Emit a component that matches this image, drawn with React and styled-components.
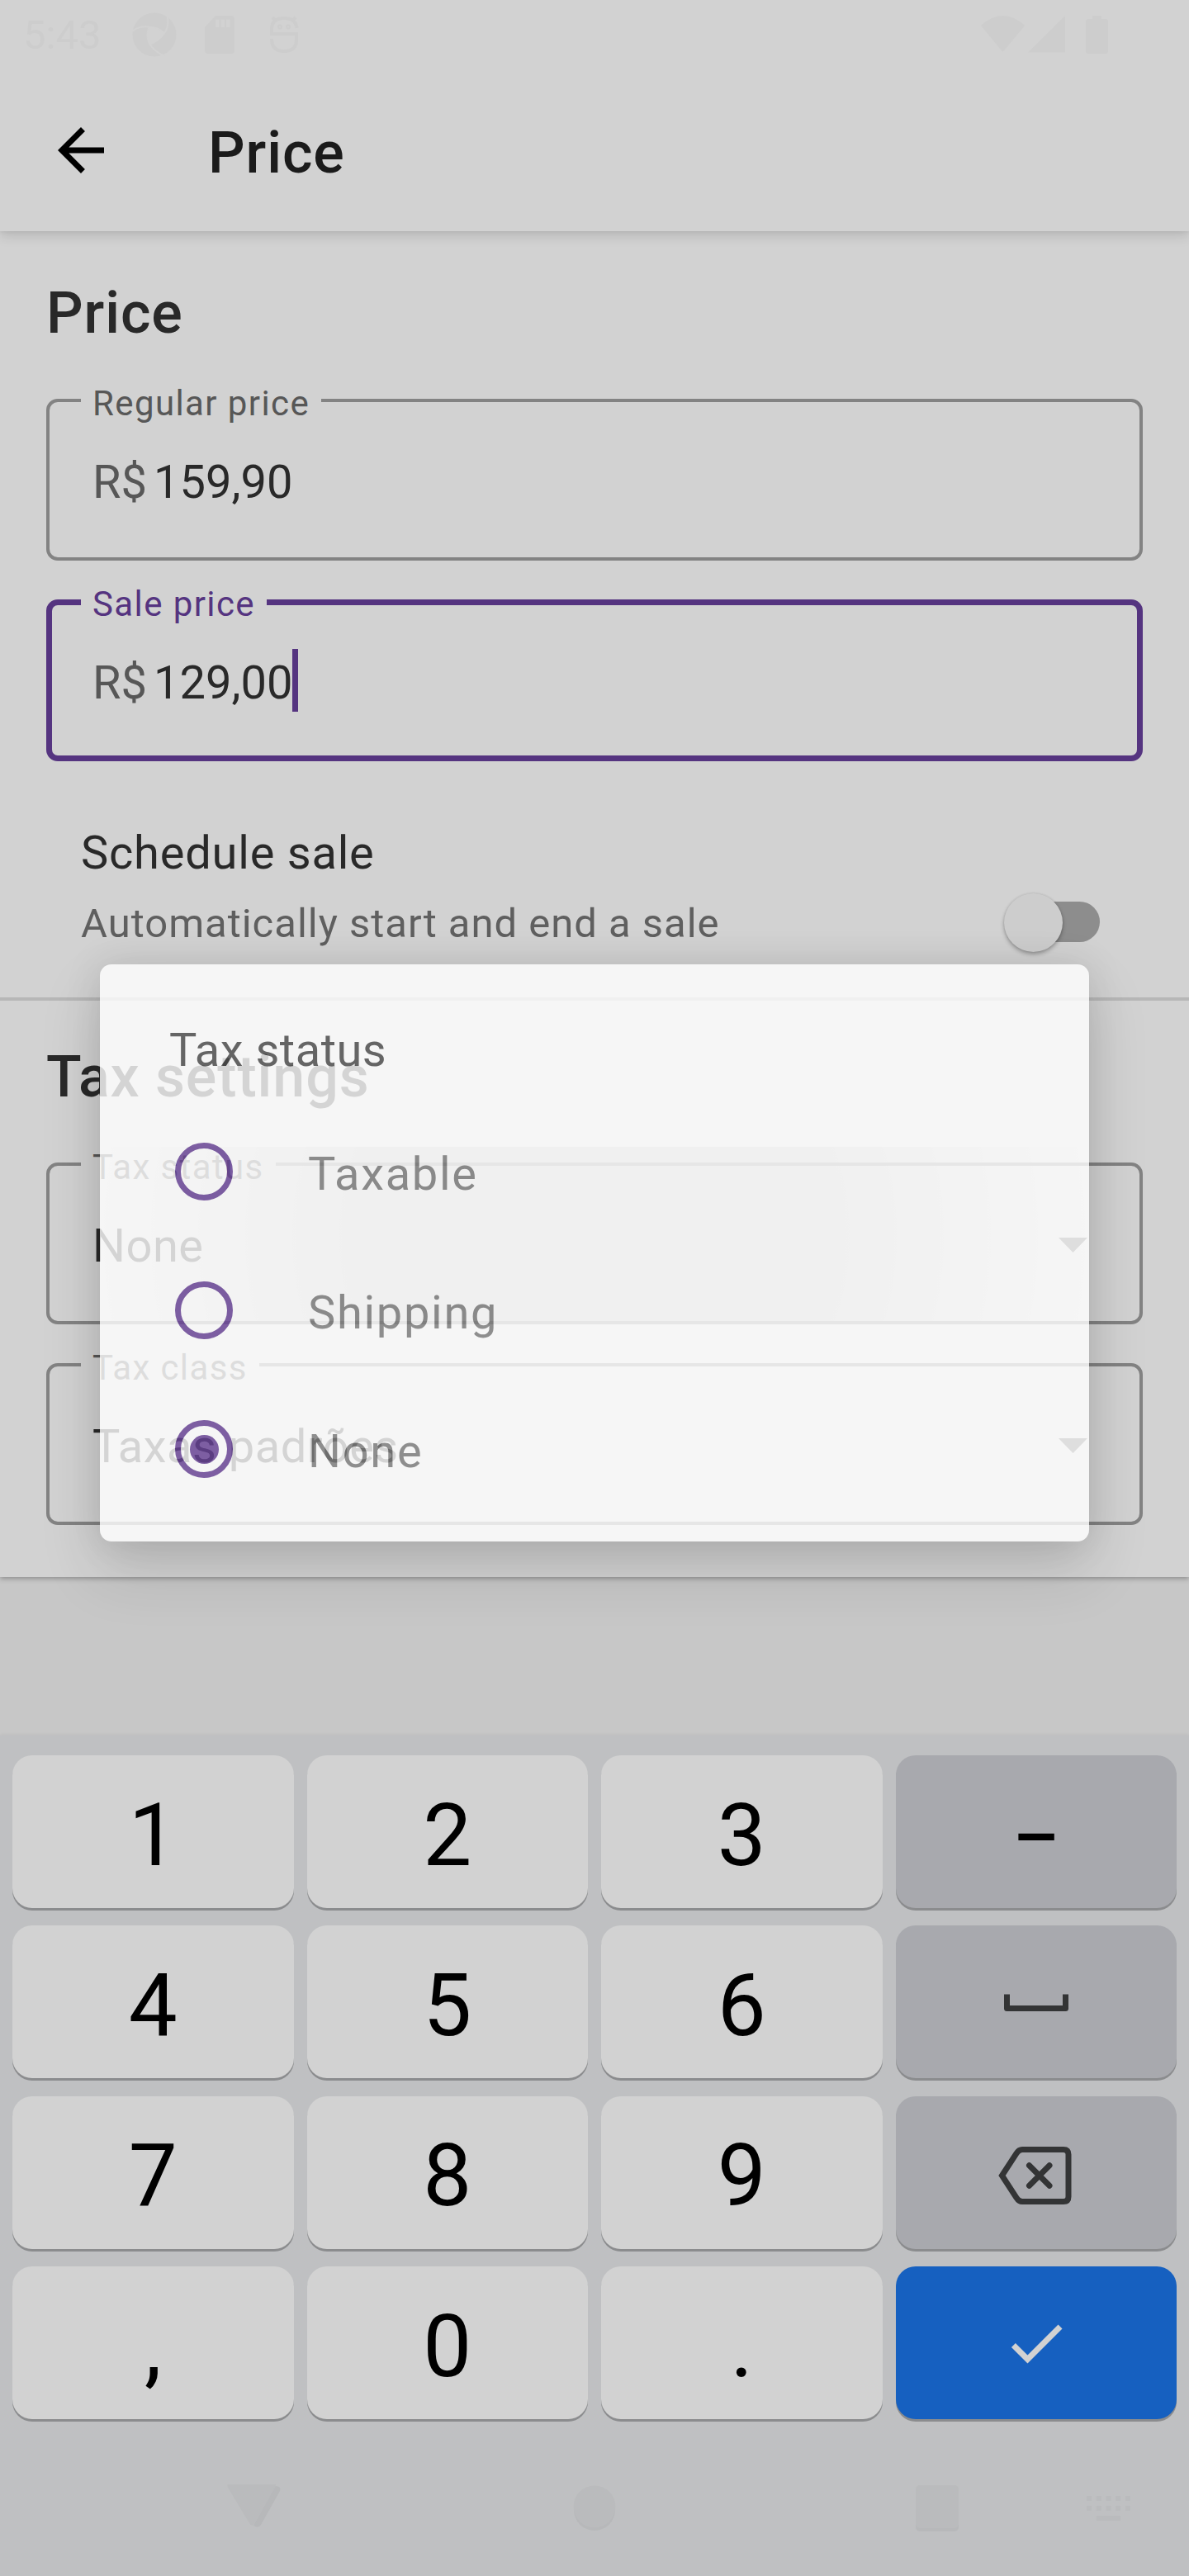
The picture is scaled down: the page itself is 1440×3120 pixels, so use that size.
import React from "react";
import styled, { createGlobalStyle, css } from "styled-components";

const ink = "#292929";
const muted = "#575757";
const purple = "#553480";
const surface = "#d2d2d2";
const faint = "#cdcdcd";

const GlobalStyle = createGlobalStyle`
  *, *::before, *::after { box-sizing: border-box; }
  body {
    margin: 0;
    background: #c7c7c7;
    font-family: Roboto, "Liberation Sans", sans-serif;
    color: ${ink};
  }
`;

const Screen = styled.div`
  position: relative;
  display: flex;
  flex-direction: column;
  width: 1440px;
  height: 3120px;
  overflow: hidden;
  background: #c7c7c7;
`;

const StatusBar = styled.div`
  position: relative;
  z-index: 2;
  display: flex;
  align-items: center;
  justify-content: space-between;
  flex: none;
  height: 84px;
  padding: 0 98px 0 28px;
  background: ${surface};
  color: ${faint};
`;

const StatusGroup = styled.div`
  display: flex;
  align-items: center;
  gap: ${(p) => p.$gap || 0}px;
`;

const Clock = styled.span`
  font-size: 49px;
  line-height: 58px;
  width: 98px;
  padding-top: 1px;
`;

const Toolbar = styled.header`
  position: relative;
  z-index: 1;
  display: flex;
  align-items: center;
  flex: none;
  height: 196px;
  padding-left: 56px;
  gap: 112px;
  background: ${surface};
  box-shadow: 0 6px 14px rgba(0, 0, 0, 0.12), 0 1px 5px rgba(0, 0, 0, 0.06);
`;

const BackIcon = styled.svg`
  width: 84px;
  height: 84px;
  fill: #000;
`;

const ToolbarTitle = styled.h1`
  margin: 0;
  padding-top: 6px;
  font-size: 70px;
  line-height: 82px;
  font-weight: 500;
  letter-spacing: 0.0125em;
  color: #1b1b1b;
`;

const Content = styled.main`
  flex: none;
  background: ${surface};
  box-shadow: 0 2px 6px rgba(0, 0, 0, 0.3);
`;

const Section = styled.section`
  display: flex;
  flex-direction: column;
  padding: ${(p) => p.$top}px 56px ${(p) => p.$bottom}px;
`;

const SectionTitle = styled.h2`
  margin: 0 0 63px;
  font-size: 70px;
  line-height: 82px;
  font-weight: 500;
  letter-spacing: 0.0125em;
`;

const Fields = styled.div`
  display: flex;
  flex-direction: column;
  gap: 47px;
`;

const FieldSlot = styled.div`
  position: relative;
  height: 196px;
  ${(p) =>
    p.$ripple &&
    css`
      &::before {
        content: "";
        position: absolute;
        inset: -19px 0 0;
        background: radial-gradient(
          circle 610px at center,
          rgba(0, 0, 0, 0.14) 0,
          rgba(0, 0, 0, 0.13) 290px,
          rgba(0, 0, 0, 0) 600px
        );
      }
    `}
`;

const Outline = styled.fieldset`
  position: relative;
  display: flex;
  align-items: flex-start;
  margin: 0;
  height: 196px;
  min-width: 0;
  border: ${(p) => (p.$focused ? 7 : 4)}px solid ${(p) => (p.$focused ? purple : "#838383")};
  border-radius: 14px;
  padding: ${(p) => (p.$focused ? "61px 49px 0" : "64px 52px 0")};
`;

const Legend = styled.legend`
  height: ${(p) => (p.$focused ? 7 : 4)}px;
  margin-left: -14px;
  padding: 0 14px;
  font-size: 42px;
  line-height: 11px;
  letter-spacing: 1.4px;
  color: ${(p) => (p.$focused ? purple : muted)};
`;

const Value = styled.span`
  font-size: 56px;
  line-height: 66px;
  letter-spacing: ${(p) => p.$spacing || 0}px;
`;

const Prefix = styled(Value)`
  color: ${muted};
  width: 74px;
`;

const Caret = styled.span`
  width: 7px;
  height: 76px;
  margin: -8px 0 0 0;
  background: ${purple};
`;

const DropArrow = styled.svg`
  width: 35px;
  height: 18px;
  margin: 23px 11px 0 auto;
  fill: #5a5a5a;
`;

const SwitchRow = styled.div`
  display: flex;
  align-items: flex-start;
  justify-content: space-between;
  height: 286px;
  padding: 78px 108px 0 98px;
`;

const SwitchText = styled.div`
  display: flex;
  flex-direction: column;
  gap: 24px;
`;

const SwitchTitle = styled.span`
  font-size: 56px;
  line-height: 66px;
  letter-spacing: 0.78px;
`;

const SwitchHint = styled.span`
  font-size: 49px;
  line-height: 58px;
  letter-spacing: 0.98px;
  color: #5f5f5f;
`;

const SwitchTrack = styled.span`
  display: flex;
  align-items: center;
  width: 104px;
  height: 49px;
  margin-top: 92px;
  border-radius: 25px;
  background: #8d8d8d;
`;

const SwitchThumb = styled.span`
  flex: none;
  width: 71px;
  height: 71px;
  margin: 2px 0 0 -12px;
  border-radius: 50%;
  background: #cdcdcd;
  box-shadow: 0 3px 5px rgba(0, 0, 0, 0.28), 0 0 3px rgba(0, 0, 0, 0.12);
`;

const Divider = styled.hr`
  height: 4px;
  margin: 0;
  border: 0;
  background: #b7b7b7;
`;

const Keyboard = styled.div`
  display: grid;
  grid-template-columns: repeat(4, 1fr);
  grid-auto-rows: 185px;
  gap: 21.35px 16px;
  flex: none;
  height: 849px;
  margin-top: auto;
  padding: 24px 15px 0;
  background: #bfc0c2;
  box-shadow: 0 -1px 4px rgba(0, 0, 0, 0.05);
`;

const keyTones = {
  light: css`
    background: #d2d2d2;
    color: #000;
  `,
  dark: css`
    background: #a8a9ae;
    color: #333435;
  `,
  primary: css`
    background: #1660c0;
    color: #d2d2d2;
  `,
};

const Key = styled.button`
  display: flex;
  align-items: center;
  justify-content: center;
  border: 0;
  border-radius: 24px;
  padding: ${(p) => p.$drop || 0}px 0 0;
  font: 400 105px/123px Roboto, "Liberation Sans", sans-serif;
  box-shadow: 0 3px 0 #8b8c8e;
  ${(p) => keyTones[p.$tone]}
`;

const Dash = styled.span`
  font-size: 87px;
  font-weight: 500;
  color: #000;
`;

const NavBar = styled.nav`
  flex: none;
  height: 169px;
  background: #bfc0c2;
  display: flex;
  align-items: center;
  padding: 5px 71px 0 275px;
`;

const NavIcon = styled.svg`
  flex: none;
  display: block;
  width: ${(p) => p.$w}px;
  height: ${(p) => p.$h}px;
  margin-left: ${(p) => p.$ml || 0}px;
  fill: #babbbd;
`;

const Dialog = styled.div`
  position: absolute;
  left: 121px;
  top: 1168px;
  z-index: 3;
  display: flex;
  flex-direction: column;
  width: 1198px;
  height: 699px;
  padding: 71px 84px 0;
  border-radius: 14px;
  background: #fff;
  opacity: 0.8;
  box-shadow: 0 34px 70px rgba(0, 0, 0, 0.17), 0 0 44px rgba(0, 0, 0, 0.13);
`;

const DialogTitle = styled.h3`
  margin: 0 0 30px;
  font-size: 56px;
  line-height: 66px;
  font-weight: 400;
  letter-spacing: 0.5px;
  color: #4b4b4b;
`;

const Option = styled.div`
  display: flex;
  align-items: center;
  gap: 91px;
  height: 168px;
  padding-left: 7px;
  font-size: 56px;
  line-height: 66px;
  letter-spacing: 1.7px;
  color: #7e7e7e;
`;

const Radio = styled.span`
  display: flex;
  align-items: center;
  justify-content: center;
  width: 70px;
  height: 70px;
  border: 7px solid #684297;
  border-radius: 50%;
  &::after {
    content: "";
    width: 35px;
    height: 35px;
    border-radius: 50%;
    background: ${(p) => (p.$checked ? "#684297" : "transparent")};
  }
`;

const OptionLabel = styled.span`
  padding-top: 5px;
`;

function PriceField({ label, value, focused }) {
  return (
    <FieldSlot>
      <Outline $focused={focused}>
        <Legend $focused={focused}>{label}</Legend>
        <Prefix>R$</Prefix>
        <Value>{value}</Value>
        {focused && <Caret />}
      </Outline>
    </FieldSlot>
  );
}

function SelectField({ label, value, ripple }) {
  return (
    <FieldSlot $ripple={ripple}>
      <Outline>
        <Legend>{label}</Legend>
        <Value $spacing={0.5}>{value}</Value>
        <DropArrow viewBox="0 0 10 5" preserveAspectRatio="none">
          <path d="M0 0h10L5 5z" />
        </DropArrow>
      </Outline>
    </FieldSlot>
  );
}

const SpaceIcon = () => (
  <svg width="78" height="21" viewBox="0 0 78 21" fill="none" stroke="currentColor" strokeWidth="7" strokeLinejoin="round">
    <path d="M3.500 0.500v17h71v-17" />
  </svg>
);

const BackspaceIcon = () => (
  <svg width="91" height="70" viewBox="0 0 91 70" fill="none" stroke="currentColor" strokeWidth="7">
    <path d="M4.500 35 22 8.200Q25 3.500 29 3.500H79q6 0 6 6v51q0 6-6 6H29q-4 0-7-4.700z" />
    <path d="M37.500 22.800 62 47.200M62 22.800 37.500 47.200" strokeLinecap="round" />
  </svg>
);

const CheckIcon = () => (
  <svg width="84" height="84" viewBox="0 0 24 24" fill="currentColor">
    <path d="M9 16.170 4.830 12l-1.420 1.410L9 19 21 7l-1.410-1.410z" />
  </svg>
);

const keys = [
  { text: "1" }, { text: "2" }, { text: "3" }, { dash: true, tone: "dark", drop: 15 },
  { text: "4" }, { text: "5" }, { text: "6" }, { icon: <SpaceIcon />, tone: "dark", drop: 2 },
  { text: "7" }, { text: "8" }, { text: "9" }, { icon: <BackspaceIcon />, tone: "dark", drop: 7 },
  { text: "," }, { text: "0" }, { text: "." }, { icon: <CheckIcon />, tone: "primary" },
];

export default function App() {
  return (
    <Screen>
      <GlobalStyle />
      <StatusBar>
        <StatusGroup $gap={34}>
          <Clock>5:43</Clock>
          <svg width="54" height="54" viewBox="0 0 54 54" fill={faint}>
            <circle cx="27" cy="27" r="26.500" />
            <path
              d="M0 23Q9 16 21 17.700Q32 18 39 25.300M42.300 3Q45.500 16 39 25.300Q32 35 21.300 38.700M20.700 17.700Q16 28 21.300 38.700Q28 48 39 53"
              fill="none"
              stroke={surface}
              strokeWidth="2"
            />
            <path d="M21 17.700Q32 18 39 25.300Q32 35 21.300 38.700Q16 28 21 17.700z" fill={surface} />
          </svg>
          <svg width="36" height="46" viewBox="0 0 36 46" fill={faint}>
            <path d="M13 0h19q4 0 4 4v38q0 4-4 4H4q-4 0-4-4V14z" />
            <path d="M13 4.500h4.500v9.500h-4.500zM19.500 4.500h4.500v9.500h-4.500zM26 4.500h4.500v9.500h-4.500z" fill={surface} />
          </svg>
          <svg width="48" height="46" viewBox="0 0 48 46" fill="none" stroke={faint} strokeWidth="4">
            <path d="M12 2l5 5M40 2l-5 5M41.500 15Q40 3 26 3T11 15V22H41V29Q41 43 26 43T11 28" />
            <circle cx="21" cy="13.500" r="1" />
            <circle cx="31" cy="13.500" r="1" />
          </svg>
        </StatusGroup>
        <StatusGroup>
          <svg width="154" height="46" viewBox="0 0 154 46" fill={faint}>
            <path d="M0 12Q26.500-12 53 12L26.500 44z" />
            <path d="M57 44.500 102 0v44.500z" />
            <path d="M135 0h11v4h5q3 0 3 3v36q0 3-3 3h-21q-3 0-3-3V7q0-3 3-3h5z" />
          </svg>
        </StatusGroup>
      </StatusBar>

      <Toolbar>
        <BackIcon viewBox="0 0 24 24">
          <path d="M20 11H7.830l5.590-5.590L12 4l-8 8 8 8 1.410-1.410L7.830 13H20v-2z" />
        </BackIcon>
        <ToolbarTitle>Price</ToolbarTitle>
      </Toolbar>

      <Content>
        <Section $top={58} $bottom={0}>
          <SectionTitle>Price</SectionTitle>
          <Fields>
            <PriceField label="Regular price" value="159,90" />
            <PriceField label="Sale price" value="129,00" focused />
          </Fields>
        </Section>
        <SwitchRow>
          <SwitchText>
            <SwitchTitle>Schedule sale</SwitchTitle>
            <SwitchHint>Automatically start and end a sale</SwitchHint>
          </SwitchText>
          <SwitchTrack>
            <SwitchThumb />
          </SwitchTrack>
        </SwitchRow>
        <Divider />
        <Section $top={51} $bottom={63}>
          <SectionTitle>Tax settings</SectionTitle>
          <Fields>
            <SelectField label="Tax status" value="None" ripple />
            <SelectField label="Tax class" value="Taxas padrões" />
          </Fields>
        </Section>
      </Content>

      <Keyboard>
        {keys.map((k, i) => (
          <Key key={i} $tone={k.tone || "light"} $drop={k.text ? 9 : k.drop}>
            {k.text}
            {k.dash && <Dash>–</Dash>}
            {k.icon}
          </Key>
        ))}
      </Keyboard>

      <NavBar>
        <NavIcon $w={66} $h={58} viewBox="0 2 66 58">
          <path d="M58 4Q66 4 64 10L41 51Q38 56 32 52z" fill="#b7b8ba" />
          <path d="M4 0H55Q61 1 58 6L33 50Q30 54 27 49L1 6Q-1 1 4 0z" />
        </NavIcon>
        <NavIcon $w={52} $h={56} $ml={353} viewBox="0 0 52 56">
          <circle cx="26" cy="30" r="25" fill="#b7b8ba" />
          <circle cx="26" cy="26" r="25.500" />
        </NavIcon>
        <NavIcon $w={54} $h={56} $ml={362} viewBox="0 0 54 56">
          <rect x="1" y="4" width="52" height="52" rx="5" fill="#b7b8ba" />
          <rect x="1" y="0" width="52" height="52" rx="5" />
        </NavIcon>
        <NavIcon $w={53} $h={30} $ml={154} viewBox="0 0 53 30">
          {[0, 11.7, 23.4, 35.1, 46.8].map((x) => (
            <path key={x} d={`M${x} 0h6v6h-6zM${x} 12h6v6h-6z`} />
          ))}
          <path d="M11.700 24h29.500v6H11.700z" />
        </NavIcon>
      </NavBar>

      <Dialog>
        <DialogTitle>Tax status</DialogTitle>
        <Option><Radio /><OptionLabel>Taxable</OptionLabel></Option>
        <Option><Radio /><OptionLabel>Shipping</OptionLabel></Option>
        <Option><Radio $checked /><OptionLabel>None</OptionLabel></Option>
      </Dialog>
    </Screen>
  );
}
